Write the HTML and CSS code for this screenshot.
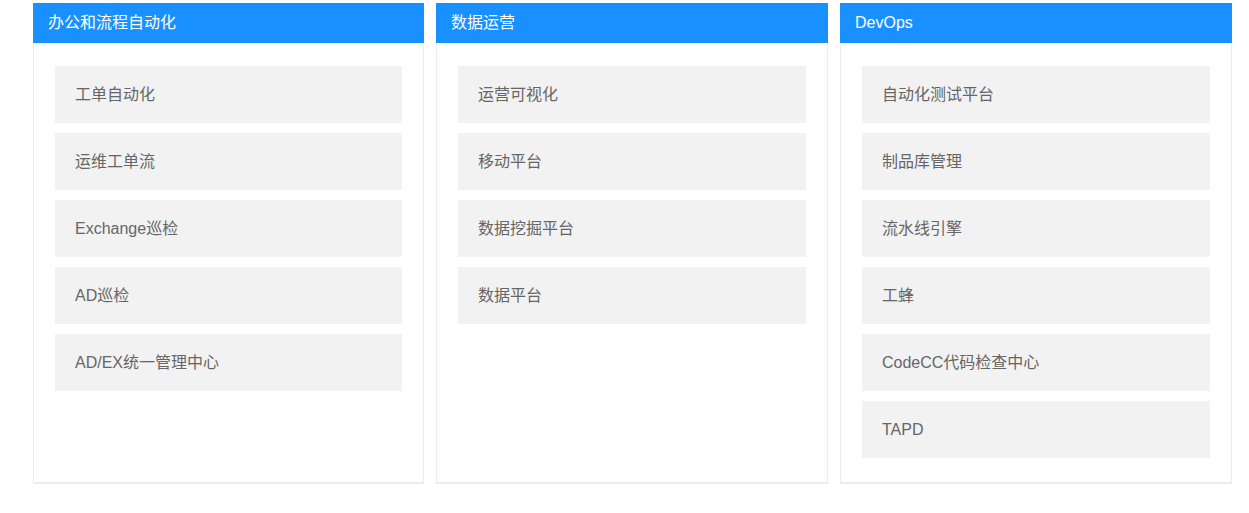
FILE: index.html
```html
<!DOCTYPE html>
<html lang="zh-CN">
<head>
<meta charset="utf-8">
<title>Apps</title>
<link rel="stylesheet" href="styles.css">
</head>
<body>
<div class="grid">
  <section class="card">
    <div class="card-head">办公和流程自动化</div>
    <div class="card-body">
      <div class="item">工单自动化</div>
      <div class="item">运维工单流</div>
      <div class="item">Exchange巡检</div>
      <div class="item">AD巡检</div>
      <div class="item">AD/EX统一管理中心</div>
    </div>
  </section>
  <section class="card">
    <div class="card-head">数据运营</div>
    <div class="card-body">
      <div class="item">运营可视化</div>
      <div class="item">移动平台</div>
      <div class="item">数据挖掘平台</div>
      <div class="item">数据平台</div>
    </div>
  </section>
  <section class="card">
    <div class="card-head">DevOps</div>
    <div class="card-body">
      <div class="item">自动化测试平台</div>
      <div class="item">制品库管理</div>
      <div class="item">流水线引擎</div>
      <div class="item">工蜂</div>
      <div class="item">CodeCC代码检查中心</div>
      <div class="item">TAPD</div>
    </div>
  </section>
</div>
</body>
</html>
```

FILE: styles.css
```css
* { box-sizing: border-box; }
html, body { margin: 0; padding: 0; background: #fff; }
body {
  font-family: "Liberation Sans", "Noto Sans CJK SC", sans-serif;
  font-size: 16px;
}
.grid {
  display: grid;
  grid-template-columns: 391px 392px 392px;
  column-gap: 12px;
  margin: 3px 0 0 33px;
}
.card {
  display: flex;
  flex-direction: column;
}
.card-head {
  height: 40px;
  line-height: 40px;
  background: #1890ff;
  color: #fff;
  padding: 0 15px;
  font-size: 16px;
}
.card-body {
  flex: 1;
  border: 1px solid #ececec;
  border-top: none;
  border-bottom-width: 2px;
  padding: 23px 21px 24px;
  display: flex;
  flex-direction: column;
  gap: 10px;
}
.item {
  height: 57px;
  line-height: 20px;
  background: #f2f2f2;
  color: #666;
  display: flex;
  align-items: center;
  padding-left: 20px;
}
```
